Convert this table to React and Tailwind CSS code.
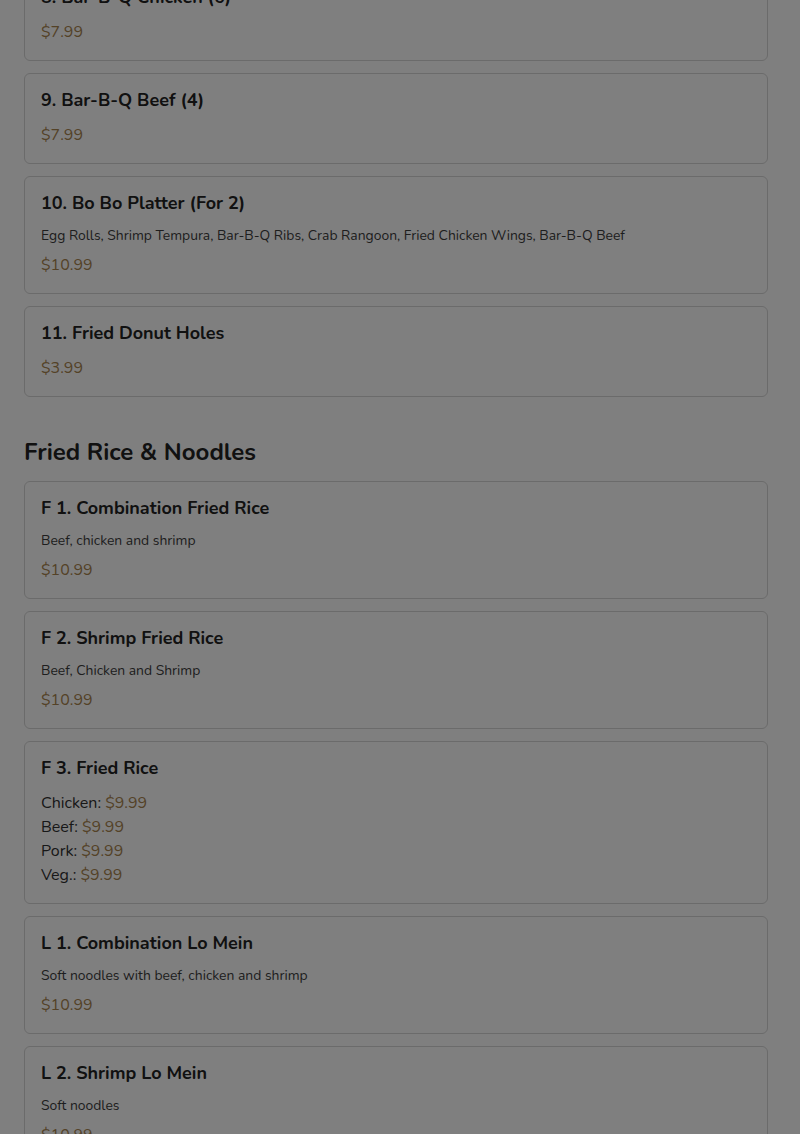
const appetizers = [
  { name: '8. Bar-B-Q Chicken (6)', price: '$7.99' },
  { name: '9. Bar-B-Q Beef (4)', price: '$7.99' },
  {
    name: '10. Bo Bo Platter (For 2)',
    description: 'Egg Rolls, Shrimp Tempura, Bar-B-Q Ribs, Crab Rangoon, Fried Chicken Wings, Bar-B-Q Beef',
    price: '$10.99',
  },
  { name: '11. Fried Donut Holes', price: '$3.99' },
];

const friedRice = [
  { name: 'F 1. Combination Fried Rice', description: 'Beef, chicken and shrimp', price: '$10.99' },
  { name: 'F 2. Shrimp Fried Rice', description: 'Beef, Chicken and Shrimp', price: '$10.99' },
  {
    name: 'F 3. Fried Rice',
    options: [
      { label: 'Chicken', price: '$9.99' },
      { label: 'Beef', price: '$9.99' },
      { label: 'Pork', price: '$9.99' },
      { label: 'Veg.', price: '$9.99' },
    ],
  },
  { name: 'L 1. Combination Lo Mein', description: 'Soft noodles with beef, chicken and shrimp', price: '$10.99' },
  { name: 'L 2. Shrimp Lo Mein', description: 'Soft noodles', price: '$10.99' },
];

function MenuItem({ item }) {
  return (
    <div className="rounded-md border border-[#d6d6d6] bg-white px-4 pt-[14px] pb-4">
      <h3 className="mb-[11px] text-lg font-bold leading-6 text-[#222]">{item.name}</h3>
      {item.description && <p className="mb-[7px] text-[13.9px] leading-5 text-[#3c3c3c]">{item.description}</p>}
      {item.price && <p className="text-base leading-6 text-[#a8844e]">{item.price}</p>}
      {item.options && (
        <div>
          {item.options.map((option) => (
            <p key={option.label} className="text-base leading-6 text-[#303030]">
              {option.label}: <span className="text-[#a8844e]">{option.price}</span>
            </p>
          ))}
        </div>
      )}
    </div>
  );
}

export default function App() {
  return (
    <div className="relative h-[1134px] overflow-hidden bg-white" style={{ fontFamily: 'Nunito, Lato, "Noto Sans", sans-serif' }}>
      <main className="-mt-[30px] pl-6 pr-8">
        <section className="space-y-3">
          {appetizers.map((item) => (
            <MenuItem key={item.name} item={item} />
          ))}
        </section>

        <section className="mt-[39px]">
          <h2 className="mb-[13px] text-2xl font-bold leading-8 text-[#222]">Fried Rice &amp; Noodles</h2>
          <div className="space-y-3">
            {friedRice.map((item) => (
              <MenuItem key={item.name} item={item} />
            ))}
          </div>
        </section>
      </main>
      <div className="fixed inset-0 bg-black/50" />
    </div>
  );
}
